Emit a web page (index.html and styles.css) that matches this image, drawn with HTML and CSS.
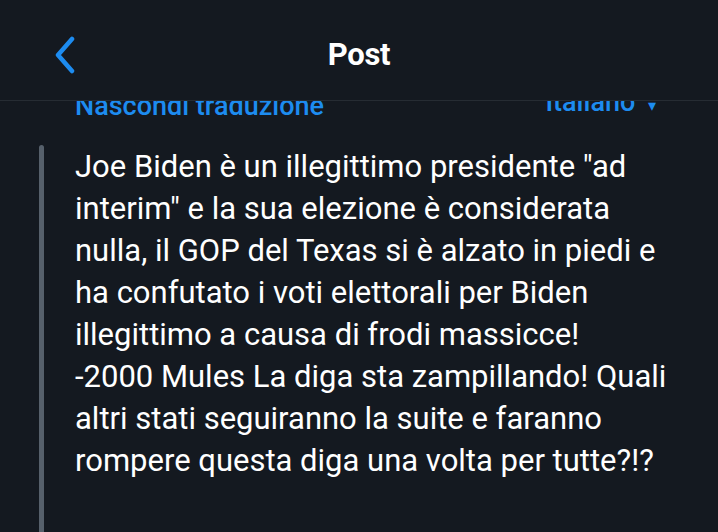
FILE: index.html
```html
<!DOCTYPE html>
<html>
<head>
<meta name="viewport" content="width=device-width, initial-scale=1">
<link rel="stylesheet" href="styles.css">
</head>
<body>
  <!-- Top bar with back arrow and title -->
  <div class="topbar">
    <svg class="back" width="24" height="38" viewBox="0 0 24 38">
      <path d="M19 3 L5 19 L19 35" fill="none" stroke="#1d8cf0" stroke-width="4.5" stroke-linecap="round" stroke-linejoin="round"/>
    </svg>
    <h1>Post</h1>
  </div>

  <!-- Translation row, scrolled half under the top bar -->
  <div class="translate">
    <div class="translate-inner">
      <span>Nascondi traduzione</span>
      <span class="lang">Italiano <span class="caret">&#9662;</span></span>
    </div>
  </div>

  <!-- Quoted translated text -->
  <div class="quote">
    <div class="bar"></div>
    <p class="text">Joe Biden è un illegittimo presidente "ad interim" e la sua elezione è considerata nulla, il GOP del Texas si è alzato in piedi e ha confutato i voti elettorali per Biden illegittimo a causa di frodi massicce!<br>-2000 Mules La diga sta zampillando! Quali altri stati seguiranno la suite e faranno rompere questa diga una volta per tutte?!?</p>
  </div>
</body>
</html>
```

FILE: styles.css
```css
/* Whole page, dark mode */
html, body {
  height: 100%;
}
body {
  margin: 0;
  background-color: #141920;
  color: #ffffff;
  font-family: Roboto, "Liberation Sans", sans-serif;
  display: flex;
  flex-direction: column;
  overflow: hidden;
}

/* Top bar */
.topbar {
  height: 101px;
  border-bottom: 1px solid #262c33;
  display: flex;
  align-items: center;
  justify-content: center;
  position: relative;
  flex-shrink: 0;
  box-sizing: border-box;
  padding-top: 8px;
}
.topbar h1 {
  margin: 0;
  font-size: 31px;
  font-weight: 700;
  letter-spacing: -0.3px;
}
.back {
  position: absolute;
  left: 53px;
  top: 36px;
}

/* Only the bottom of this row shows under the top bar */
.translate {
  height: 14px;
  overflow: hidden;
  flex-shrink: 0;
}
.translate-inner {
  display: flex;
  justify-content: space-between;
  align-items: flex-end;
  height: 15px;
  padding: 0 62px 0 75px;
  color: #1d8cf0;
  font-size: 27px;
  font-weight: 500;
  line-height: 20px;
}
.caret {
  font-size: 16px;
  margin-left: 6px;
}

/* Quote block with grey bar on the left */
.quote {
  flex: 1;
  display: flex;
  gap: 31px;
  margin-top: 30px;
  padding-left: 39px;
}
.bar {
  width: 5px;
  background-color: #56606b;
  border-radius: 3px 3px 0 0;
}
.text {
  margin: 1px 0 0 0;
  width: 600px;
  font-size: 31px;
  line-height: 42px;
}
```
